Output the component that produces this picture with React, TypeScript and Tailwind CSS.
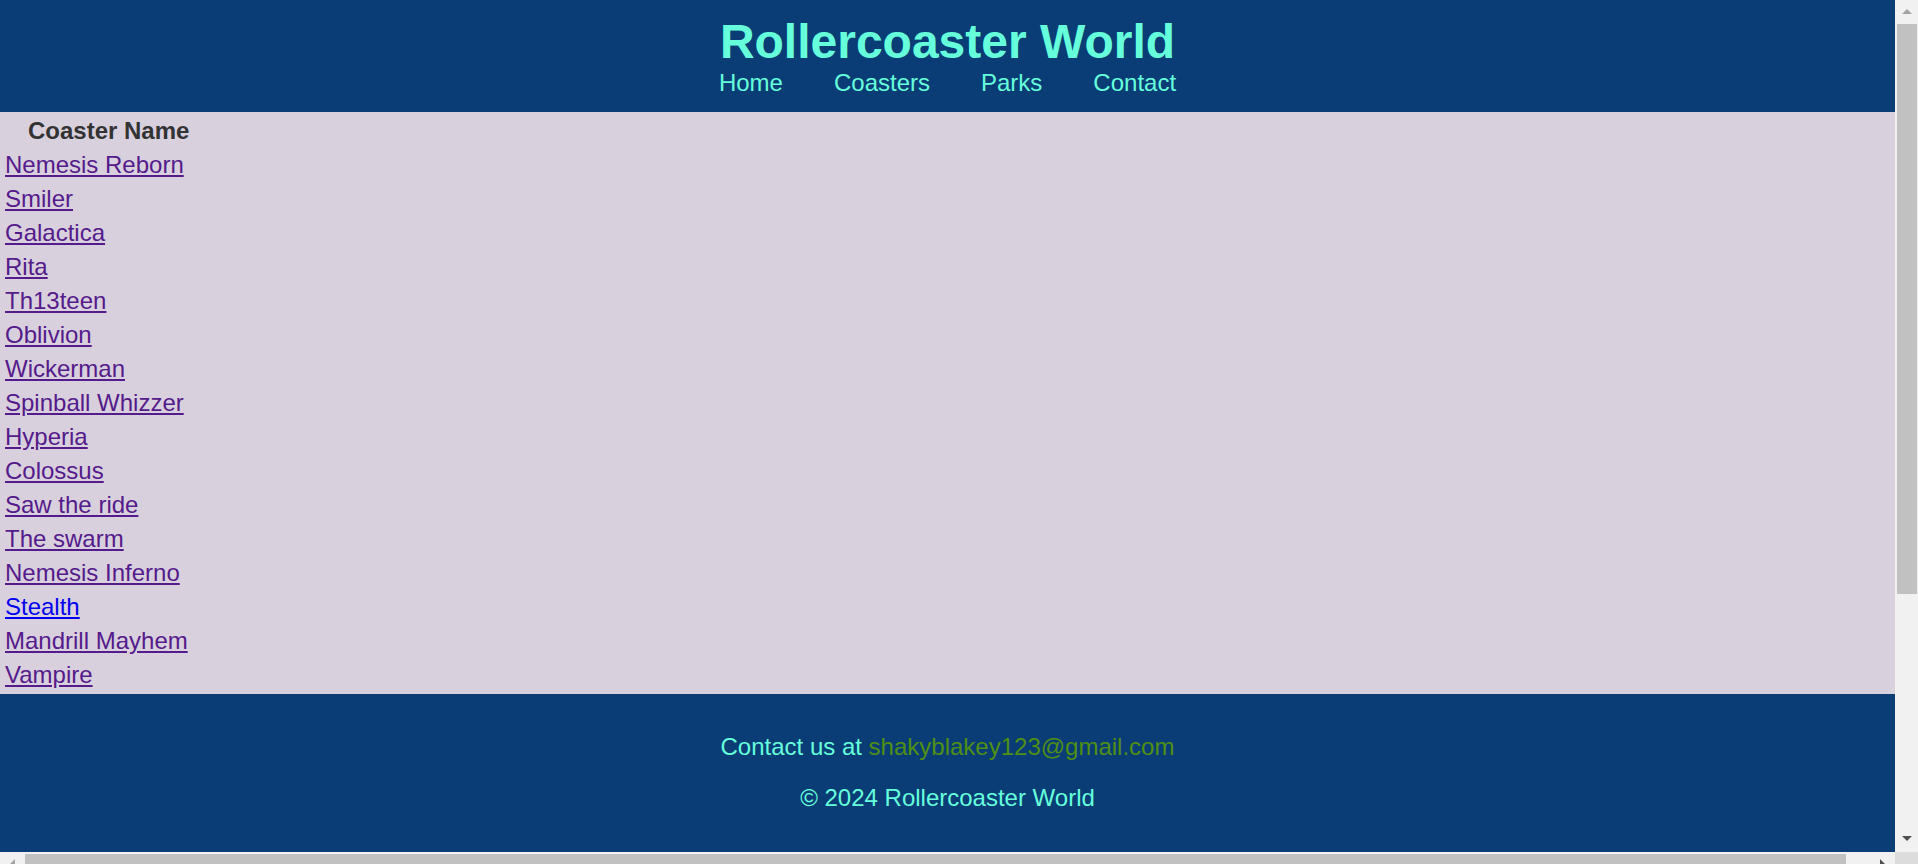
const coasters = [
  { name: "Nemesis Reborn", visited: true },
  { name: "Smiler", visited: true },
  { name: "Galactica", visited: true },
  { name: "Rita", visited: true },
  { name: "Th13teen", visited: true },
  { name: "Oblivion", visited: true },
  { name: "Wickerman", visited: true },
  { name: "Spinball Whizzer", visited: true },
  { name: "Hyperia", visited: true },
  { name: "Colossus", visited: true },
  { name: "Saw the ride", visited: true },
  { name: "The swarm", visited: true },
  { name: "Nemesis Inferno", visited: true },
  { name: "Stealth", visited: false },
  { name: "Mandrill Mayhem", visited: true },
  { name: "Vampire", visited: true },
];

const navLinks = ["Home", "Coasters", "Parks", "Contact"];

function Arrow({ dir, color }: { dir: "up" | "down" | "left" | "right"; color: string }) {
  const vertical = dir === "up" || dir === "down";
  const points = {
    up: "0,5 5,0 10,5",
    down: "0,0 10,0 5,5",
    left: "5,0 5,10 0,5",
    right: "0,0 5,5 0,10",
  }[dir];
  return (
    <svg
      width={vertical ? 10 : 5}
      height={vertical ? 5 : 10}
      viewBox={vertical ? "0 0 10 5" : "0 0 5 10"}
      className="shrink-0"
    >
      <polygon points={points} fill={color} />
    </svg>
  );
}

function VerticalScrollbar() {
  return (
    <div className="w-[23px] shrink-0 flex flex-col bg-[#f1f1f1]">
      <div className="h-[22px] pl-[7px] pt-[9px]">
        <Arrow dir="up" color="#a3a3a3" />
      </div>
      <div className="flex-1">
        <div className="mt-[2px] ml-[2px] mr-px h-[570px] bg-[#c1c1c1]" />
      </div>
      <div className="h-[22px] pl-[7px] pt-[6px]">
        <Arrow dir="down" color="#505050" />
      </div>
    </div>
  );
}

function HorizontalScrollbar() {
  return (
    <div className="h-[12px] shrink-0 flex overflow-hidden">
      <div className="flex-1 flex bg-[#f1f1f1]">
        <div className="w-[23px] pl-[10px] pt-[7px]">
          <Arrow dir="left" color="#a3a3a3" />
        </div>
        <div className="flex-1">
          <div className="mt-[2px] ml-[2px] w-[1821px] h-[10px] bg-[#c1c1c1]" />
        </div>
        <div className="w-[23px] pl-[8px] pt-[7px]">
          <Arrow dir="right" color="#505050" />
        </div>
      </div>
      <div className="w-[23px] bg-[#dcdcdc]" />
    </div>
  );
}

export default function App() {
  return (
    <div className="h-screen w-full flex flex-col overflow-hidden font-['Liberation_Sans',Arial,sans-serif]">
      <div className="flex flex-1 min-h-0">
        {/* Page viewport */}
        <div className="flex-1 min-w-0 overflow-hidden bg-[#d9d0de]">
          {/* Header */}
          <header className="bg-[#0a3c76] py-4 flex flex-col items-center">
            <h1 className="text-[48px] leading-[52px] font-bold text-[#66ffdb]">Rollercoaster World</h1>
            <nav className="mt-[2px] flex gap-[51px] text-[24px] leading-[26px]">
              {navLinks.map((link) => (
                <a key={link} href="#" className="text-[#66ffdb]">
                  {link}
                </a>
              ))}
            </nav>
          </header>

          {/* Coaster list */}
          <main className="bg-[#d9d0de] pb-px">
            <table className="border-separate border-spacing-[3px] text-[24px] leading-[31px]">
              <thead>
                <tr>
                  <th className="p-0 pl-[25px] text-left font-bold text-[#333333]">Coaster Name</th>
                </tr>
              </thead>
              <tbody>
                {coasters.map((c) => (
                  <tr key={c.name}>
                    <td className="p-0 pl-[2px]">
                      <a
                        href="#"
                        className={c.visited ? "text-[#551a8b] underline" : "text-[#0000ee] underline"}
                      >
                        {c.name}
                      </a>
                    </td>
                  </tr>
                ))}
              </tbody>
            </table>
          </main>

          {/* Footer */}
          <footer className="h-[510px] bg-[#0a3c76] pt-[40px] flex flex-col items-center gap-[25px] text-[24px] leading-[26px] text-[#66ffdb]">
            <p>
              Contact us at <a href="#" className="text-[#4f8f14]">shakyblakey123@gmail.com</a>
            </p>
            <p>© 2024 Rollercoaster World</p>
          </footer>
        </div>

        <VerticalScrollbar />
      </div>

      <HorizontalScrollbar />
    </div>
  );
}
